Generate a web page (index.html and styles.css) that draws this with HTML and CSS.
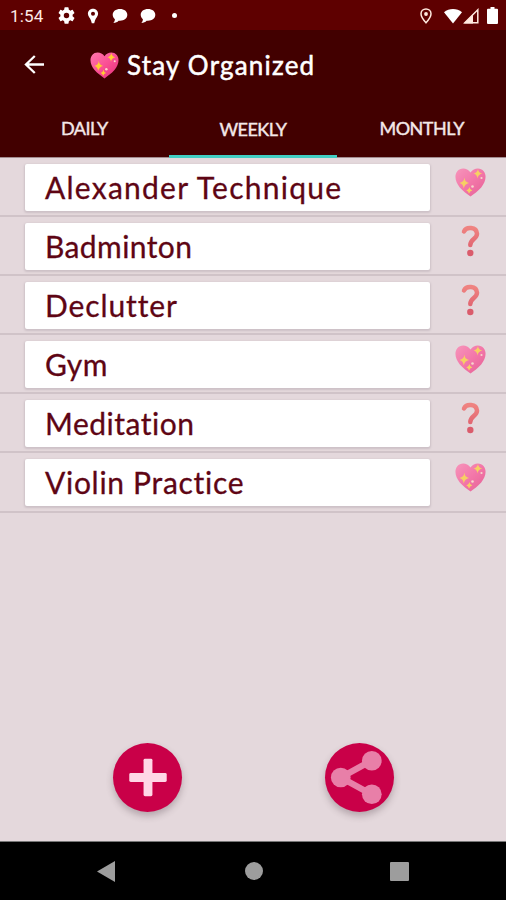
FILE: index.html
```html
<!DOCTYPE html>
<html lang="en">
<head>
<meta charset="utf-8">
<title>Stay Organized</title>
<link rel="stylesheet" href="styles.css">
</head>
<body>
<svg class="defs" width="0" height="0">
  <defs>
    <linearGradient id="pink" x1="0" y1="0" x2="1" y2="1"><stop offset="0" stop-color="#ff78ad"/><stop offset=".5" stop-color="#fa4f94"/><stop offset="1" stop-color="#e52e78"/></linearGradient>
    <linearGradient id="red" x1="0" y1="0" x2="0" y2="1"><stop offset="0" stop-color="#f5605b"/><stop offset="1" stop-color="#e23a48"/></linearGradient>
    <symbol id="heart" viewBox="0 0 31 29">
      <path fill="url(#pink)" d="M15.5 4.6C12.2-.4 5.5-.6 2.3 3.200C-1.200 7.600.6 14.500 4.800 19.400C8 23 12 25.800 15.500 28.500C19 25.800 23 23 26.200 19.400C30.400 14.500 32.200 7.600 28.700 3.200C25.500-.6 18.800-.4 15.500 4.600Z"/>
      <path fill="#ffce31" d="M9.500 9.500Q9.700 14.200 14 15Q9.700 15.800 8.700 20.500Q8.300 15.800 4.500 15Q8.800 14.200 9.500 9.500ZM23 1Q23.100 4.500 27.300 5.600Q23.100 6.400 22.500 10.500Q22 6.400 18.500 5.600Q22.200 4.600 23 1ZM14.500 19Q14.700 21.700 17.200 22.500Q14.800 23.100 14 25.700Q13.500 23.100 11.300 22.500Q13.800 21.700 14.500 19Z"/>
      <circle cx="17.500" cy="18.500" r="1.300" fill="#ffd6c6"/><circle cx="26.500" cy="10" r="1.100" fill="#ffd6c6"/>
    </symbol>
    <symbol id="question" viewBox="0 0 20 32">
      <path fill="none" stroke="url(#red)" stroke-width="4.500" stroke-linecap="round" d="M3 6.500C5 1.500 15.500 1.500 16 8.700C16 14 9.300 14.200 9.300 20"/>
      <circle cx="9.300" cy="28" r="3.200" fill="#d7283e"/>
    </symbol>
    <symbol id="chat" viewBox="0 0 16 16"><path fill="#fff" d="M8 1C3.800 1 .7 3.400.7 6.800C.7 8.600 1.600 10.100 2.900 11.200C2.900 12.800 2.300 13.900 1.300 15C3.700 14.900 5.400 14 6.600 12.700C11.600 13.300 15.300 10.600 15.300 6.800C15.300 3.400 12.200 1 8 1Z"/></symbol>
  </defs>
</svg>
<div class="screen">
  <div class="status">
    <span class="clock">1:54</span>
    <svg class="gear" viewBox="2 2 20 20"><path fill="#fff" d="M19.140 12.940c.040-.300.060-.610.060-.940 0-.320-.020-.640-.070-.940l2.030-1.580a.490.490 0 0 0 .120-.610l-1.920-3.320a.490.490 0 0 0-.590-.220l-2.390.960a7 7 0 0 0-1.620-.940l-.360-2.540A.480.480 0 0 0 13.920 2.400h-3.840a.470.470 0 0 0-.470.410l-.360 2.540c-.590.240-1.130.570-1.620.940l-2.390-.960a.470.470 0 0 0-.590.220L2.740 8.870a.480.480 0 0 0 .120.610l2.030 1.580a6 6 0 0 0 0 1.880l-2.030 1.580a.490.490 0 0 0-.120.610l1.920 3.320c.120.220.370.290.590.220l2.390-.960c.500.380 1.030.700 1.620.940l.360 2.540c.050.240.240.410.480.410h3.840c.240 0 .440-.170.470-.410l.360-2.540c.590-.240 1.130-.560 1.620-.940l2.390.960c.220.080.470 0 .590-.220l1.920-3.320a.470.470 0 0 0-.120-.610zM12 15.200a3.200 3.200 0 1 1 0-6.400 3.200 3.200 0 0 1 0 6.400z"/></svg>
    <svg class="pin" viewBox="0 0 12 16"><path fill="#fff" fill-rule="evenodd" d="M6 .8C3 .8.900 3 .900 5.700C.900 8.200 3.300 10 4 12.500L4.800 15.300H7.200L8 12.500C8.700 10 11.100 8.200 11.100 5.700C11.100 3 9 .8 6 .8ZM6 3.700A2 2 0 1 1 6 7.700A2 2 0 0 1 6 3.700Z"/></svg>
    <svg class="chat first"><use href="#chat"/></svg>
    <svg class="chat"><use href="#chat"/></svg>
    <i class="dot"></i>
    <span class="grow"></span>
    <svg class="place" viewBox="0 0 12 16"><path fill="none" stroke="#ffe9df" stroke-width="1.500" d="M6 1C3.200 1 1 3.100 1 5.800C1 9.300 6 14.800 6 14.800S11 9.300 11 5.800C11 3.100 8.800 1 6 1Z"/><circle cx="6" cy="6" r="1.900" fill="#ffe9df"/></svg>
    <svg class="wifi" viewBox="0 0 18 16"><path fill="#fff" d="M0 4.200C5-.2 13-.2 18 4.200L9 15.500Z"/></svg>
    <svg class="cell" viewBox="0 0 16 16"><path fill="none" stroke="#ffe9df" stroke-width="1.500" d="M1.800 14.800L14.800 1.800V14.800Z"/><path fill="#ffe9df" d="M1 15.500L10 6.500V15.500Z"/></svg>
    <svg class="battery" viewBox="0 0 11 17"><path fill="#fff" d="M3.500 0H7.500V1.700H10A1 1 0 0 1 11 2.700V16A1 1 0 0 1 10 17H1A1 1 0 0 1 0 16V2.700A1 1 0 0 1 1 1.700H3.500Z"/></svg>
  </div>
  <header class="bar">
    <svg class="back" viewBox="0 0 22 20"><path fill="none" stroke="#fff" stroke-width="2.400" d="M21 10H2M11.300 1L2 10L11.300 19"/></svg>
    <svg class="logo" viewBox="0 0 31 29"><use href="#heart"/></svg>
    <h1 class="title">Stay Organized</h1>
  </header>
  <nav class="tabs">
    <div class="tab daily"><span>DAILY</span></div>
    <div class="tab weekly active"><span>WEEKLY</span></div>
    <div class="tab monthly"><span>MONTHLY</span></div>
  </nav>
  <main class="list">
    <div class="row"><div class="card alexander"><span>Alexander Technique</span></div><svg class="mark"><use href="#heart"/></svg></div>
    <div class="row"><div class="card badminton"><span>Badminton</span></div><svg class="mark unknown"><use href="#question"/></svg></div>
    <div class="row"><div class="card declutter"><span>Declutter</span></div><svg class="mark unknown"><use href="#question"/></svg></div>
    <div class="row"><div class="card gym"><span>Gym</span></div><svg class="mark"><use href="#heart"/></svg></div>
    <div class="row"><div class="card meditation"><span>Meditation</span></div><svg class="mark unknown"><use href="#question"/></svg></div>
    <div class="row"><div class="card violin"><span>Violin Practice</span></div><svg class="mark"><use href="#heart"/></svg></div>
  </main>
  <div class="actions">
    <button class="fab" aria-label="Add"><svg viewBox="0 0 70 70"><rect x="31" y="16" width="9" height="38" rx="1.500" fill="#ffd7e6"/><rect x="16.500" y="30.500" width="38" height="9" rx="1.500" fill="#ffd7e6"/></svg></button>
    <button class="fab" aria-label="Share"><svg viewBox="0 0 70 70"><g fill="#e87fa8"><path d="M16 35L47 18M16 35L47 52" stroke="#e87fa8" stroke-width="6.500"/><circle cx="16" cy="35" r="10"/><circle cx="47.500" cy="18" r="10"/><circle cx="47.500" cy="52" r="10"/></g></svg></button>
  </div>
  <footer class="nav">
    <svg class="nav-back" viewBox="0 0 18 21"><path fill="#9d9d9d" d="M18 0V21L0 10.500Z"/></svg>
    <i class="nav-home"></i>
    <i class="nav-recent"></i>
  </footer>
</div>
</body>
</html>
```
FILE: styles.css
```css
* { box-sizing: border-box; }
body { margin: 0; background: #e4d8dc; font-family: Lato, "Open Sans", sans-serif; font-variant-ligatures: none; }
.defs { display: block; height: 0; }
.screen { width: 506px; height: 900px; display: flex; flex-direction: column; overflow: hidden; }
svg { display: block; flex: none; }
.grow { flex: 1; }

.status { height: 30px; background: #5e0000; display: flex; align-items: center; padding: 1px 8px 0 10px; }
.clock { width: 48px; color: #ffe9e4; font: 17px/20px Roboto, sans-serif; letter-spacing: .2px; padding-top: 1px; }
.gear { width: 17px; height: 17px; }
.pin { width: 12px; height: 16px; margin-left: 12px; }
.chat { width: 16px; height: 16px; margin-left: 12px; }
.chat.first { margin-left: 13px; }
.dot { width: 5px; height: 5px; border-radius: 50%; background: #fff; margin-left: 16px; }
.place { width: 12px; height: 16px; margin-right: 12px; }
.wifi { width: 18px; height: 16px; margin-right: 1px; }
.cell { width: 16px; height: 16px; margin-right: 8px; }
.battery { width: 11px; height: 17px; }

.bar { height: 70px; background: #420000; display: flex; align-items: center; padding-left: 24px; }
.back { width: 21px; height: 19px; margin-top: -2px; }
.logo { width: 29px; height: 27px; margin-left: 45px; }
.title { margin: 0 0 0 8px; color: #fff; font-size: 26px; line-height: 32px; font-weight: 400; letter-spacing: 1.200px; -webkit-text-stroke: .5px #fff; white-space: nowrap; }

.tabs { height: 58px; background: #420000; display: flex; border-bottom: 1px solid #a38c90; }
.tab { flex: 1; display: flex; align-items: center; justify-content: center; color: #f4e8e8; font-size: 18px; letter-spacing: -.5px; -webkit-text-stroke: .4px #f4e8e8; white-space: nowrap; padding-top: 1px; border-bottom: 3px solid transparent; }
.tab.active { border-bottom-color: #43cec3; margin-bottom: -1px; padding-top: 2px; }

.row { height: 59.100px; display: flex; align-items: flex-start; padding: 5.500px 0 0 25px; border-bottom: 2px solid #d0c3c8; }
.card { width: 405px; height: 47px; background: #fff; border-radius: 2px; box-shadow: 0 1px 2px 1px #cdc1c7; display: flex; align-items: center; padding: 0 0 1px 20px; color: #5e0514; font-size: 30px; line-height: 36px; -webkit-text-stroke: .3px #5e0514; white-space: nowrap; }
.alexander { letter-spacing: 1.250px; }
.badminton { letter-spacing: .4px; }
.declutter { letter-spacing: .9px; }
.gym { letter-spacing: .5px; }
.meditation { letter-spacing: .5px; }
.violin { letter-spacing: .7px; }
.mark { width: 31px; height: 29px; margin: 4px 0 0 25px; opacity: .7; }
.mark.unknown { width: 20px; height: 32px; margin: 2px 0 0 31px; }

.actions { margin-top: auto; height: 98px; display: flex; justify-content: space-between; padding: 0 112px 0 113px; }
.fab { width: 69px; height: 69px; border: 0; padding: 0; border-radius: 50%; background: #c90048; box-shadow: 0 4px 7px rgba(70, 50, 60, .3); }
.fab svg { width: 69px; height: 69px; }

.nav { height: 59px; background: #000; border-top: 1px solid #777; display: flex; align-items: center; padding-left: 97px; }
.nav-back { width: 18px; height: 21px; }
.nav-home { width: 18px; height: 18px; border-radius: 50%; background: #9d9d9d; margin-left: 130px; }
.nav-recent { width: 19px; height: 19px; border-radius: 1px; background: #9d9d9d; margin-left: 127px; }
```
